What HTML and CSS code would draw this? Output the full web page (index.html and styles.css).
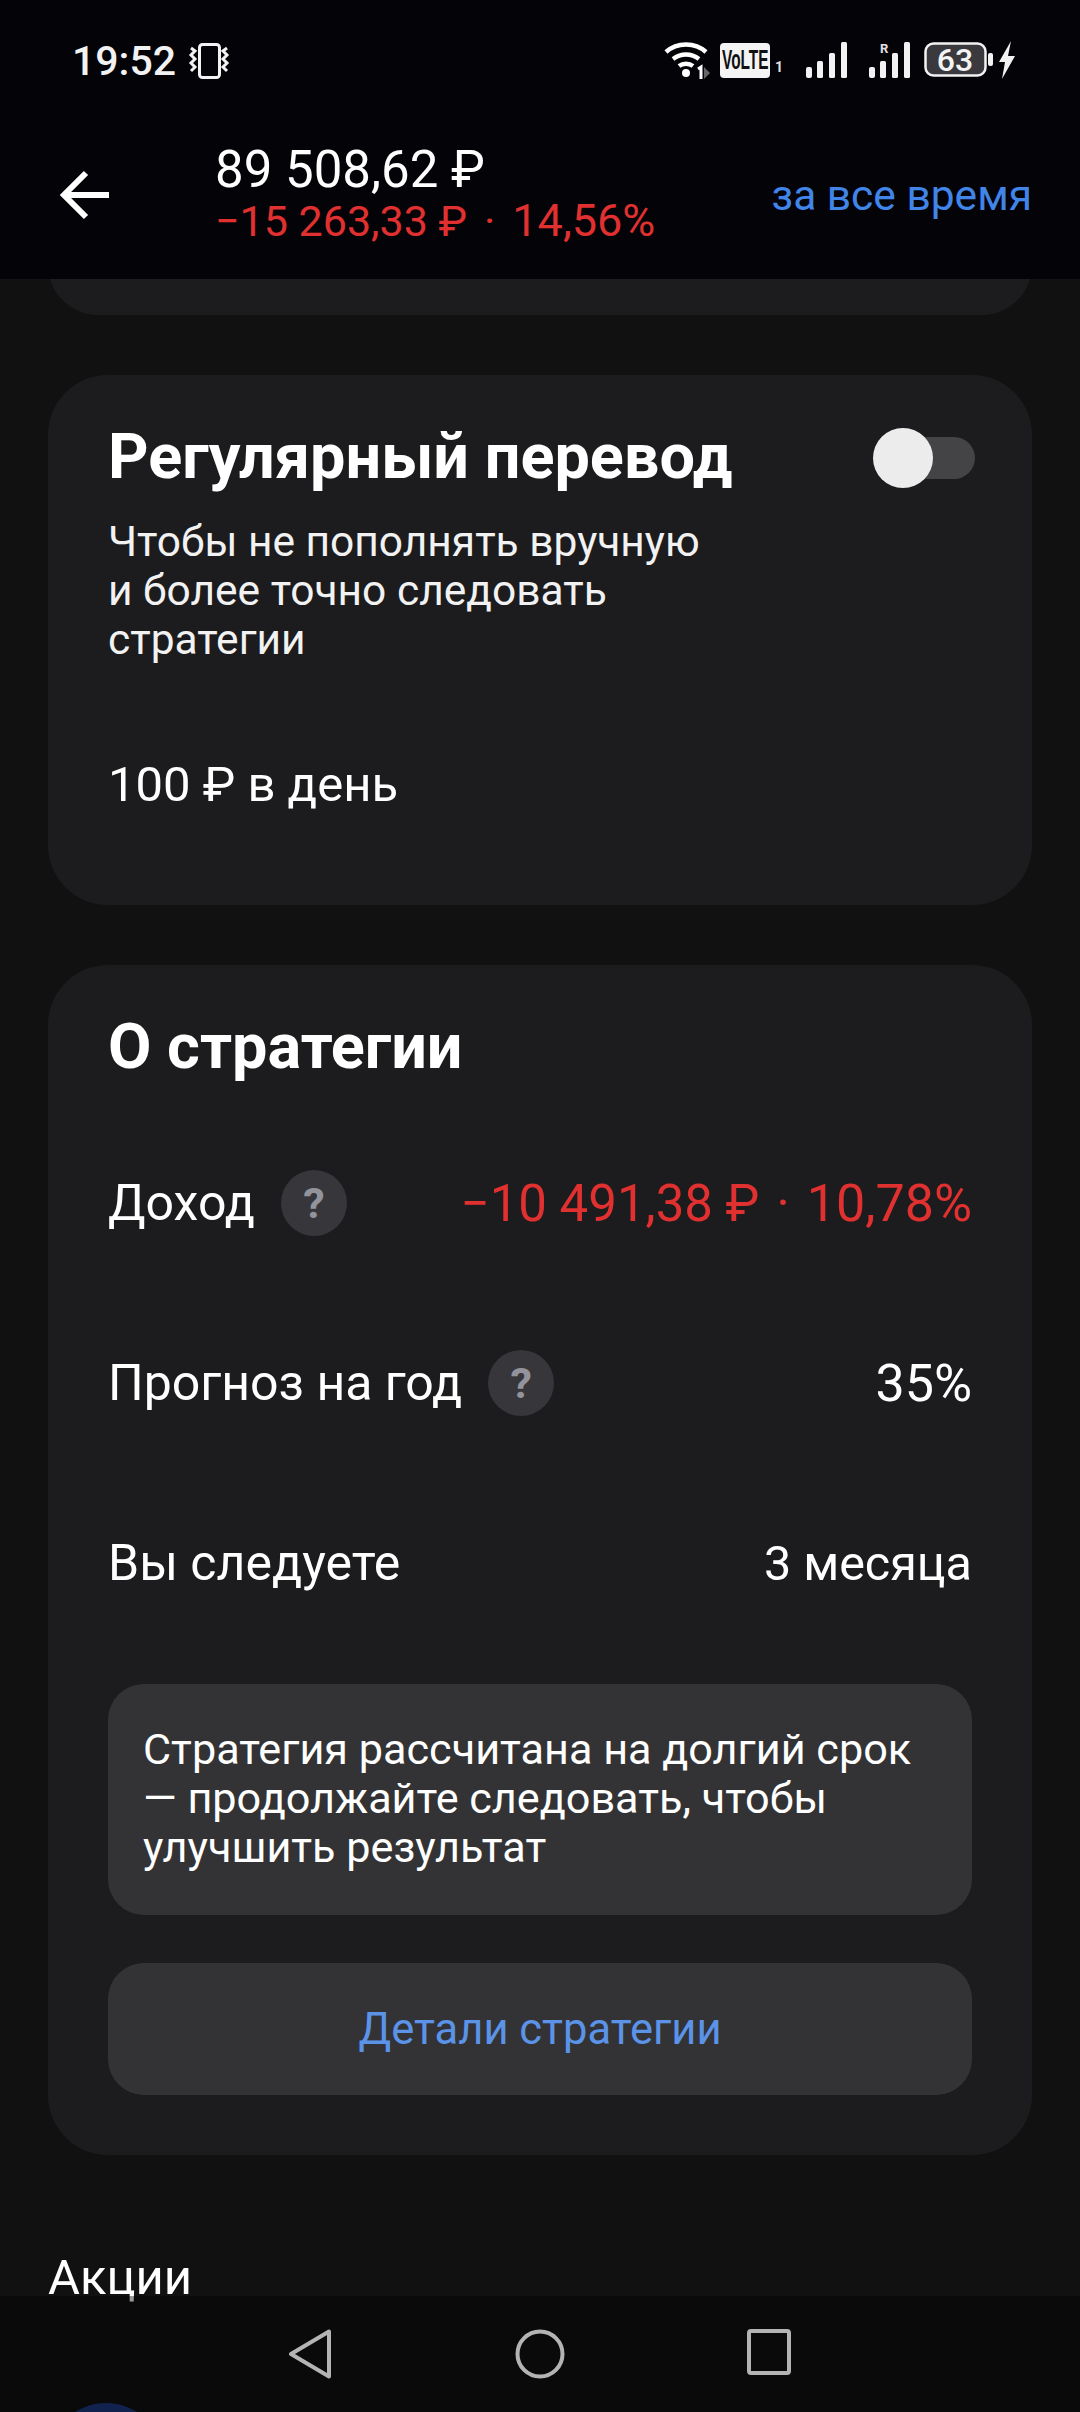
FILE: index.html
```html
<!DOCTYPE html>
<html lang="ru">
<head>
    <meta charset="UTF-8">
    <meta name="viewport" content="width=device-width, initial-scale=1.0">
    <title>Стратегия</title>
    <link rel="stylesheet" href="styles.css">
</head>
<body>
    <div class="screen">
        <header class="top">
            <div class="status">
                <div class="status-left">
                    <span class="time">19:52</span>
                    <svg class="ic-vibrate" width="42" height="36" viewBox="0 0 42 36" fill="none" stroke="#f2f2f2">
                        <rect x="11.500" y="1.500" width="20" height="33" rx="3" stroke-width="3"/>
                        <path d="M3 5l4 3-4 4 4 4-4 4 4 4-4 4M39 5l-4 3 4 4-4 4 4 4-4 4 4 4" stroke-width="3"/>
                    </svg>
                </div>
                <div class="status-right">
                    <svg class="ic-wifi" width="46" height="38" viewBox="0 0 46 38" fill="none" stroke="#fff" stroke-width="4.5">
                        <path d="M2 11C13 1 31 1 42 11M9 18c8-6 18-6 26 0M15 25c4-3 10-3 14 0"/>
                        <circle cx="22" cy="32" r="4" fill="#fff" stroke="none"/>
                        <path d="M40 26l6 6-6 6z" fill="#666" stroke="none"/>
                        <path d="M34 28l3-2v12" stroke-width="3"/>
                    </svg>
                    <div class="volte"><span class="volte-label">VoLTE</span></div>
                    <span class="sim-label">1</span>
                    <svg class="ic-signal" width="41" height="36" viewBox="0 0 41 36" fill="#f2f2f2">
                        <rect x="0" y="25" width="6" height="11" rx="2"/>
                        <rect x="11" y="19" width="6" height="17" rx="1.5"/>
                        <rect x="23" y="11" width="6" height="25" rx="1.5"/>
                        <rect x="35" y="0" width="6" height="36" rx="1.5"/>
                    </svg>
                    <svg class="ic-signal ic-roaming" width="41" height="36" viewBox="0 0 41 36" fill="#f2f2f2">
                        <rect x="0" y="25" width="6" height="11" rx="2"/>
                        <rect x="11" y="19" width="6" height="17" rx="1.5"/>
                        <rect x="23" y="11" width="6" height="25" rx="1.5"/>
                        <rect x="35" y="0" width="6" height="36" rx="1.5"/>
                        <text x="11" y="11" class="roaming-label">R</text>
                    </svg>
                    <svg class="ic-battery" width="92" height="38" viewBox="0 0 92 38">
                        <rect x="1.500" y="2.500" width="60" height="32" rx="8" fill="#3a3a3e" stroke="#f2f2f2" stroke-width="2.5"/>
                        <rect x="64" y="12" width="5" height="13" rx="2" fill="#f2f2f2"/>
                        <text x="31" y="30" text-anchor="middle" class="battery-label">63</text>
                        <path d="M87 0L75 21h6l-3 17 13-23h-7z" fill="#f2f2f2"/>
                    </svg>
                </div>
            </div>
            <div class="titlebar">
                <svg class="ic-back" width="50" height="50" viewBox="0 0 50 50" fill="none" stroke="#fff" stroke-width="6">
                    <path d="M49 25H5M26 3L4 25l22 22"/>
                </svg>
                <div class="summary">
                    <div class="summary-value">89 508,62 ₽</div>
                    <div class="summary-diff">−15 263,33 ₽<span class="sep">·</span><span class="pct">14,56%</span></div>
                </div>
                <div class="period">за все время</div>
            </div>
        </header>

        <main class="content">
            <section class="card card-clipped"></section>

            <section class="card">
                <div class="card-head">
                    <h2>Регулярный перевод</h2>
                    <div class="toggle"><span class="toggle-knob"></span></div>
                </div>
                <p class="card-desc">Чтобы не пополнять вручную<br>и более точно следовать<br>стратегии</p>
                <div class="transfer">100 ₽ в день</div>
            </section>

            <section class="card">
                <div class="card-head">
                    <h2>О стратегии</h2>
                </div>
                <div class="rows">
                    <div class="row">
                        <div class="row-label">Доход <span class="hint">?</span></div>
                        <div class="row-value negative">−10 491,38 ₽<span class="sep">·</span><span class="pct">10,78%</span></div>
                    </div>
                    <div class="row">
                        <div class="row-label">Прогноз на год <span class="hint">?</span></div>
                        <div class="row-value percent">35%</div>
                    </div>
                    <div class="row">
                        <div class="row-label">Вы следуете</div>
                        <div class="row-value">3 месяца</div>
                    </div>
                </div>
                <div class="note">Стратегия рассчитана на долгий срок<br>— продолжайте следовать, чтобы<br>улучшить результат</div>
                <div class="btn">Детали стратегии</div>
            </section>

            <h3 class="section-title">Акции</h3>
            <div class="stock-logo"></div>
        </main>

        <!-- system buttons sit over the scrolling list -->
        <nav class="navbar">
            <svg width="44" height="50" viewBox="0 0 44 50" fill="none" stroke="#b4b4b4" stroke-width="4" stroke-linejoin="round">
                <path d="M41 2.500V47.500L3 25z"/>
            </svg>
            <svg width="50" height="50" viewBox="0 0 50 50" fill="none" stroke="#b4b4b4" stroke-width="4">
                <circle cx="25" cy="25" r="22.500"/>
            </svg>
            <svg width="44" height="46" viewBox="0 0 44 46" fill="none" stroke="#b4b4b4" stroke-width="4" stroke-linejoin="round">
                <rect x="2" y="2" width="40" height="42" rx="2"/>
            </svg>
        </nav>
    </div>
</body>
</html>
```

FILE: styles.css
```css
* {
    box-sizing: border-box;
}
html, body {
    margin: 0;
    padding: 0;
    background-color: #111111;
}
body {
    font-family: Roboto, 'Noto Sans', sans-serif;
    color: #ffffff;
}
.screen {
    position: relative;
    width: 1080px;
    height: 2412px;
    overflow: hidden;
    display: flex;
    flex-direction: column;
}

/* top bar */
.top {
    height: 279px;
    flex-shrink: 0;
    background-color: #030308;
    position: relative;
    z-index: 1;
}
.status {
    height: 122px;
    padding: 0 64px 0 72px;
    display: flex;
    justify-content: space-between;
    align-items: center;
}
.status-left {
    display: flex;
    align-items: center;
    gap: 12px;
}
.status-right {
    display: flex;
    align-items: center;
    margin-top: -2px;
}
.time {
    font-size: 41px;
    font-weight: 500;
    color: #f2f2f2;
}
.ic-wifi {
    margin-right: 10px;
}
.volte {
    width: 50px;
    height: 35px;
    border-radius: 4px;
    background-color: #f4f4f4;
    display: flex;
    align-items: center;
    justify-content: center;
    overflow: hidden;
}
.volte-label {
    font-family: 'Liberation Sans', sans-serif;
    font-size: 28px;
    font-weight: 700;
    color: #111111;
    transform: scaleX(0.55);
}
.sim-label {
    width: 36px;
    padding: 14px 0 0 5px;
    font-size: 14px;
    font-weight: 700;
    color: #e0e0e0;
}
.ic-signal {
    margin-right: 22px;
}
.ic-signal.ic-roaming {
    margin-right: 14px;
}
.roaming-label {
    font-family: Roboto, sans-serif;
    font-size: 13px;
    font-weight: 700;
    fill: #e0e0e0;
}
.battery-label {
    font-family: Roboto, sans-serif;
    font-size: 32px;
    font-weight: 500;
    fill: #f4f4f4;
}
.titlebar {
    height: 146px;
    padding: 0 48px 0 60px;
    display: flex;
    align-items: center;
}
.ic-back {
    flex-shrink: 0;
    margin-right: 107px;
}
.summary {
    flex: 1;
    margin-top: -2px;
}
.summary-value {
    font-size: 51px;
    line-height: 54px;
    margin-left: -2px;
}
.summary-diff {
    font-size: 43px;
    line-height: 48px;
    color: #e0302f;
    margin-left: -2px;
}
.summary-diff .pct {
    font-size: 45px;
}
.sep {
    margin: 0 17px;
}
.period {
    font-size: 42.500px;
    color: #4285e8;
}

/* scrolling list */
.content {
    flex: 1;
    overflow: hidden;
    padding: 0 48px;
}
.card {
    background-color: #1c1c1e;
    border-radius: 60px;
    padding: 50px 60px 60px;
    margin-bottom: 60px;
}
.card-clipped {
    height: 100px;
    margin-top: -64px;
    padding: 0;
}
.card-head {
    display: flex;
    justify-content: space-between;
    align-items: center;
    height: 66px;
}
h2 {
    margin: 0 0 4px;
    font-size: 63px;
    font-weight: 700;
}
.toggle {
    position: relative;
    width: 90px;
    height: 42px;
    margin-right: -3px;
    border-radius: 21px;
    background-color: #444446;
}
.toggle-knob {
    position: absolute;
    left: -12px;
    top: -9px;
    width: 60px;
    height: 60px;
    border-radius: 50%;
    background-color: #ececec;
}
.card-desc {
    margin: 26px 0 0;
    font-size: 42.500px;
    line-height: 49px;
    color: #f2f2f2;
}
.transfer {
    margin-top: 91px;
    padding-bottom: 30px;
    font-size: 49px;
    line-height: 60px;
}
.rows {
    margin-top: 89px;
    display: flex;
    flex-direction: column;
    gap: 114px;
}
.row {
    height: 66px;
    display: flex;
    justify-content: space-between;
    align-items: center;
    font-size: 50px;
}
.row-label {
    display: flex;
    align-items: center;
    gap: 26px;
}
.row-value {
    font-size: 48.500px;
}
.row-value.percent {
    font-size: 52px;
}
.row-value.negative {
    font-size: 51px;
    color: #e0302f;
}
.negative .pct {
    font-size: 52px;
}
.hint {
    width: 66px;
    height: 66px;
    border-radius: 50%;
    background-color: #37373b;
    color: #93939b;
    font-size: 43px;
    font-weight: 700;
    display: flex;
    align-items: center;
    justify-content: center;
}
.note {
    margin-top: 88px;
    padding: 41px 35px 0;
    height: 231px;
    border-radius: 36px;
    background-color: #333335;
    font-size: 43.200px;
    line-height: 49px;
}
.btn {
    margin-top: 48px;
    height: 132px;
    border-radius: 36px;
    background-color: #333335;
    color: #5b93e8;
    font-size: 43.500px;
    display: flex;
    align-items: center;
    justify-content: center;
}
.section-title {
    margin: 95px 0 0;
    font-size: 49px;
    font-weight: 400;
    line-height: 56px;
}
.stock-logo {
    margin-top: 97px;
    width: 116px;
    height: 116px;
    border-radius: 50%;
    background-color: #1c3a80;
}

/* system buttons */
.navbar {
    position: absolute;
    left: 0;
    right: 0;
    bottom: 0;
    height: 116px;
    padding: 33px 289px 0 288px;
    background-color: rgba(0, 0, 0, 0.4);
    display: flex;
    justify-content: space-between;
    align-items: flex-start;
}
```
